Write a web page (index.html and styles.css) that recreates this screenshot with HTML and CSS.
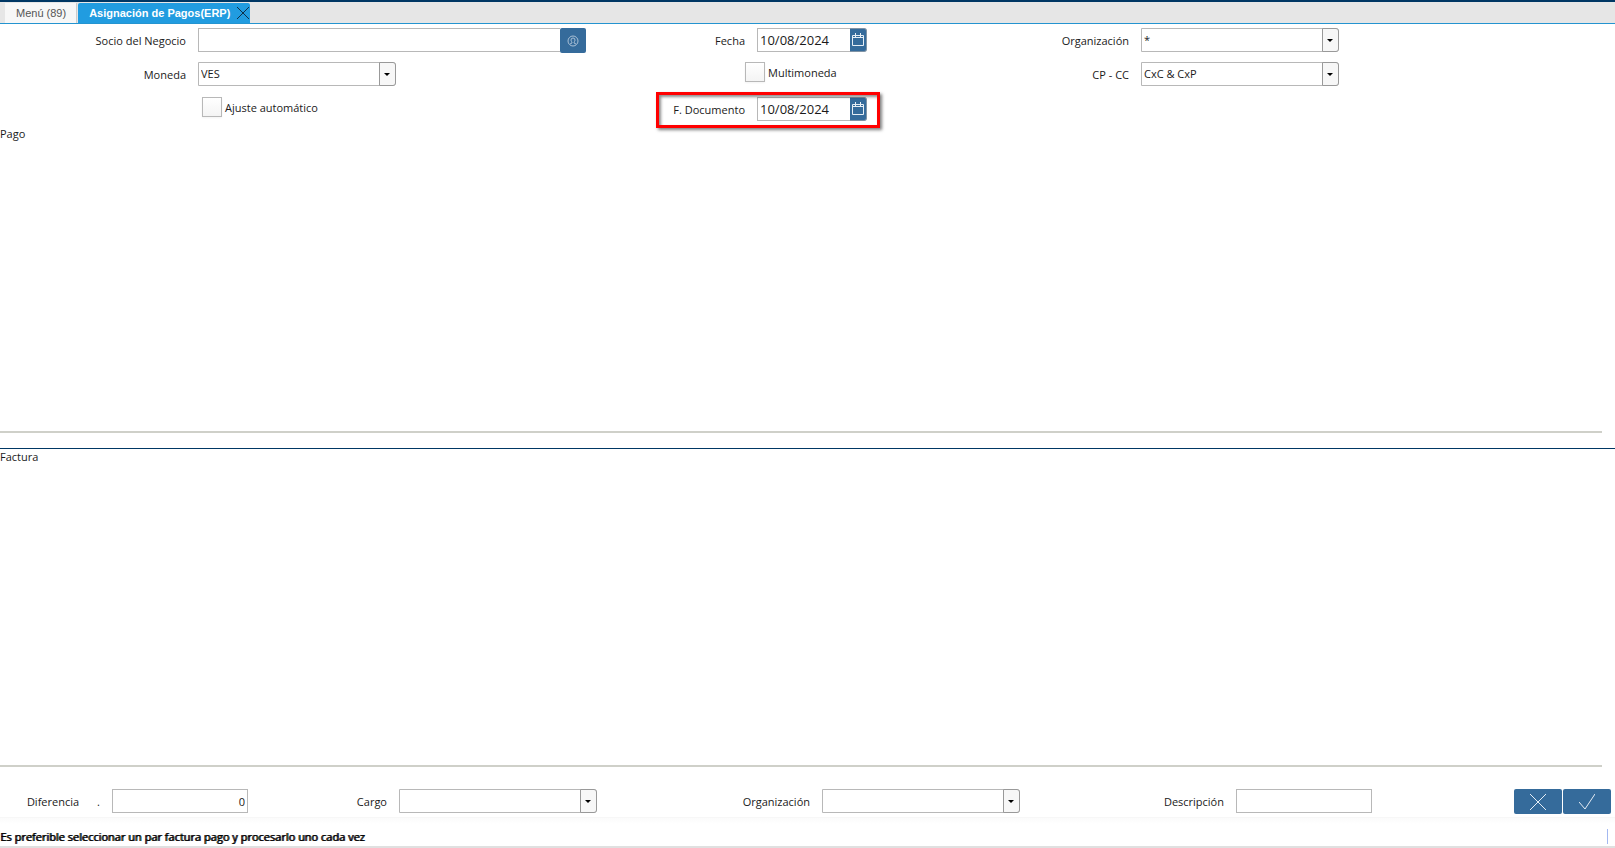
FILE: index.html
```html
<!DOCTYPE html>
<html lang="es">
<head>
<meta charset="utf-8">
<meta name="viewport" content="width=device-width, initial-scale=1">
<title>Asignación de Pagos(ERP)</title>
<link rel="stylesheet" href="styles.css">
</head>
<body>
<nav class="tabs">
  <button type="button" class="tab">Menú (89)</button>
  <div class="tab tab-active">
    <button type="button" class="tab-title">Asignación de Pagos(ERP)</button>
    <button type="button" class="tab-close" aria-label="Cerrar">
      <svg width="14" height="14" viewBox="0 0 14 14"><path d="M1 1l12 12M13 1L1 13" fill="none" stroke="#0f3048" stroke-width="1"/></svg>
    </button>
  </div>
</nav>

<main class="window">
  <form class="parameters">
    <label class="caption" for="partner">Socio del Negocio</label>
    <div class="control">
      <input class="text partner" id="partner" type="text">
      <button type="button" class="btn btn-partner" aria-label="Buscar socio">
        <svg width="12" height="12" viewBox="0 0 12 12" fill="none" stroke="#a9c0d6" stroke-width="1"><circle cx="6" cy="6" r="5"/><path d="M4 5a2 2 0 0 1 4 0c0 1.500-1 1.500-1 3l2 1M4 5c0 1.500 1 1.500 1 3L3 9"/></svg>
      </button>
    </div>
    <label class="caption" for="date">Fecha</label>
    <div class="control">
      <input class="text date" id="date" type="text" value="10/08/2024">
      <button type="button" class="btn btn-date" aria-label="Elegir fecha">
        <svg width="12" height="13" viewBox="0 0 12 13" fill="none" stroke="#e6eef5" stroke-width="1"><path d="M.5 2.500h11v10H.5zM.5 4.500h11M3.500 0v4M8.500 0v4"/></svg>
      </button>
    </div>
    <label class="caption" for="org">Organización</label>
    <div class="control">
      <span class="combo"><select id="org"><option>*</option></select><span class="arrow"></span></span>
    </div>

    <label class="caption" for="currency">Moneda</label>
    <div class="control">
      <span class="combo"><select id="currency"><option>VES</option></select><span class="arrow"></span></span>
    </div>
    <div class="control control-check check-multi">
      <input type="checkbox" id="multi"><label for="multi">Multimoneda</label>
    </div>
    <label class="caption" for="apar">CP - CC</label>
    <div class="control">
      <span class="combo"><select id="apar"><option>CxC &amp; CxP</option></select><span class="arrow"></span></span>
    </div>

    <div class="control control-check check-auto">
      <input type="checkbox" id="auto"><label for="auto">Ajuste automático</label>
    </div>
    <label class="caption" for="docdate">F. Documento</label>
    <div class="control">
      <input class="text date" id="docdate" type="text" value="10/08/2024">
      <button type="button" class="btn btn-date" aria-label="Elegir fecha">
        <svg width="12" height="13" viewBox="0 0 12 13" fill="none" stroke="#e6eef5" stroke-width="1"><path d="M.5 2.500h11v10H.5zM.5 4.500h11M3.500 0v4M8.500 0v4"/></svg>
      </button>
      <span class="highlight"></span>
    </div>
  </form>

  <section class="panel panel-payment"><h2>Pago</h2></section>
  <section class="panel panel-invoice"><h2>Factura</h2></section>

  <form class="allocation">
    <label class="caption" for="difference"><span>Diferencia</span><span class="dot">.</span></label>
    <div class="control"><input class="text amount" id="difference" type="text" value="0"></div>
    <label class="caption" for="charge">Cargo</label>
    <div class="control">
      <span class="combo"><select id="charge"><option></option></select><span class="arrow"></span></span>
    </div>
    <label class="caption" for="org2">Organización</label>
    <div class="control">
      <span class="combo"><select id="org2"><option></option></select><span class="arrow"></span></span>
    </div>
    <label class="caption" for="description">Descripción</label>
    <div class="control"><input class="text description" id="description" type="text"></div>
    <div class="actions">
      <button type="button" class="btn btn-action" aria-label="Cancelar">
        <svg width="16" height="16" viewBox="0 0 16 16"><path d="M0 0l16 16M16 0L0 16" fill="none" stroke="#e6eef5" stroke-width="1"/></svg>
      </button>
      <button type="button" class="btn btn-action" aria-label="Procesar">
        <svg width="16" height="16" viewBox="0 0 16 16"><path d="M0 8l6 7L16 0" fill="none" stroke="#e6eef5" stroke-width="1"/></svg>
      </button>
    </div>
  </form>
</main>

<footer class="status"><p>Es preferible seleccionar un par factura pago y procesarlo uno cada vez</p><span class="status-mark"></span></footer>
</body>
</html>
```
FILE: styles.css
```css
* { box-sizing: border-box; }

body {
  margin: 0;
  min-height: 100vh;
  display: flex;
  flex-direction: column;
  background: #fff;
  color: #1a1a1a;
  font: 11px/16px "Open Sans", "Noto Sans", sans-serif;
}

button, input, select { font: inherit; color: inherit; margin: 0; }
button { border: 0; padding: 0; background: none; }

.tabs {
  display: flex;
  gap: 1px;
  height: 24px;
  padding: 1px 0 0 5px;
  border-top: 2px solid #003764;
  border-bottom: 1px solid #2494d0;
  background: #e6e6e6;
  font-family: "Liberation Sans", Arial, sans-serif;
}

.tab {
  height: 20px;
  padding: 0 10px 0 11px;
  border-right: 1px solid #ccc;
  background: #f7f7f7;
  color: #555;
}

.tab-active {
  display: flex;
  align-items: center;
  gap: 6px;
  padding: 0 0 0 11px;
  border: 0;
  border-radius: 2px 2px 0 0;
  background: #219ce0;
}

.tab-title { font-weight: bold; color: #fff; }
.tab-close, .tab-close svg { display: block; }

.window { flex: 1; display: flex; flex-direction: column; }

.parameters {
  display: grid;
  grid-template-columns: 186fr 414fr 145fr 255fr 129fr 486fr;
  grid-template-rows: 34px 35px 29px;
  padding-top: 4px;
}

.caption { padding-top: 5px; text-align: right; white-space: nowrap; }
.control { position: relative; display: flex; align-items: flex-start; padding-left: 12px; }
.control-check { gap: 3px; }
.check-multi { grid-column: 4; padding-left: 0; }
.check-auto { grid-column: 2; padding-left: 16px; }
.control-check label { padding-top: 3px; }

.text {
  height: 24px;
  padding: 0 2px;
  border: 1px solid #b8b8b8;
  border-radius: 0;
  background: #fff;
}

.partner { width: 362px; border-right: 0; }
.date { width: 93px; border-right: 0; font-size: 13px; }
.amount, .description { width: 136px; }
.amount { text-align: right; }

.btn {
  display: flex;
  align-items: center;
  justify-content: center;
  border-radius: 2px;
  background: #356b9b;
}

.btn-partner { width: 26px; height: 25px; }
.btn-date { width: 17px; height: 24px; padding-bottom: 2px; border: 1px solid #7f93a5; border-left: 0; border-radius: 0 3px 3px 0; }
.btn-action { width: 48px; height: 25px; }

.combo { position: relative; display: block; width: 198px; height: 24px; }

.combo select {
  appearance: none;
  width: 100%;
  height: 24px;
  padding: 0 20px 0 2px;
  border: 1px solid #b8b8b8;
  border-radius: 0 3px 3px 0;
  background: #fff;
}

.arrow {
  position: absolute;
  top: 0;
  right: 0;
  display: grid;
  place-items: center;
  width: 17px;
  height: 24px;
  padding-right: 1px;
  border: 1px solid #999;
  border-radius: 0 3px 3px 0;
  background: #f7f7f7;
  pointer-events: none;
}

.arrow::before {
  content: "";
  border: 3px solid transparent;
  border-top-color: #000;
  border-bottom: 0;
}

input[type="checkbox"] {
  appearance: none;
  width: 20px;
  height: 20px;
  border: 1px solid #b8b8b8;
  background: linear-gradient(#fff, #f4f4f4);
  box-shadow: 0 1px 2px rgba(0, 0, 0, .05);
}

.highlight {
  position: absolute;
  top: -5px;
  left: -89px;
  width: 224px;
  height: 36px;
  border: 3px solid #f00;
  box-shadow: 2px 2px 3px rgba(0, 0, 0, .5), inset 2px 2px 3px rgba(0, 0, 0, .45);
  pointer-events: none;
}

.panel { min-height: 60px; margin-right: 13px; border-bottom: 2px solid #cfd0c9; }
.panel h2 { margin: 0; font-size: 11px; font-weight: normal; }
.panel-payment { flex: 307 0 0; margin-bottom: 15px; }
.panel-invoice { flex: 319 0 0; }

.panel-invoice::before {
  content: "";
  display: block;
  width: 100vw;
  height: 1px;
  background: #003764;
}

.allocation {
  display: grid;
  grid-template-columns: 100fr 200fr 87fr 300fr 123fr 320fr 94fr 240fr 147fr;
  height: 50px;
  padding: 22px 4px 0 0;
}

.dot { margin-left: 18px; }
.actions { display: flex; justify-content: flex-end; gap: 1px; }

.status {
  display: flex;
  align-items: center;
  justify-content: space-between;
  height: 31px;
  padding: 9px 7px 0 0;
  border-top: 1px solid #f7f7f7;
  border-bottom: 2px solid #e0e0e0;
  background: linear-gradient(#fbfbfb, #fff 6px);
}

/* Regular letter widths, thickened by a one-pixel shadow */
.status p { margin: 0; color: #000; text-shadow: 1px 0 #000; }
.status-mark { width: 1px; height: 15px; background: #a3b8f0; }
```
